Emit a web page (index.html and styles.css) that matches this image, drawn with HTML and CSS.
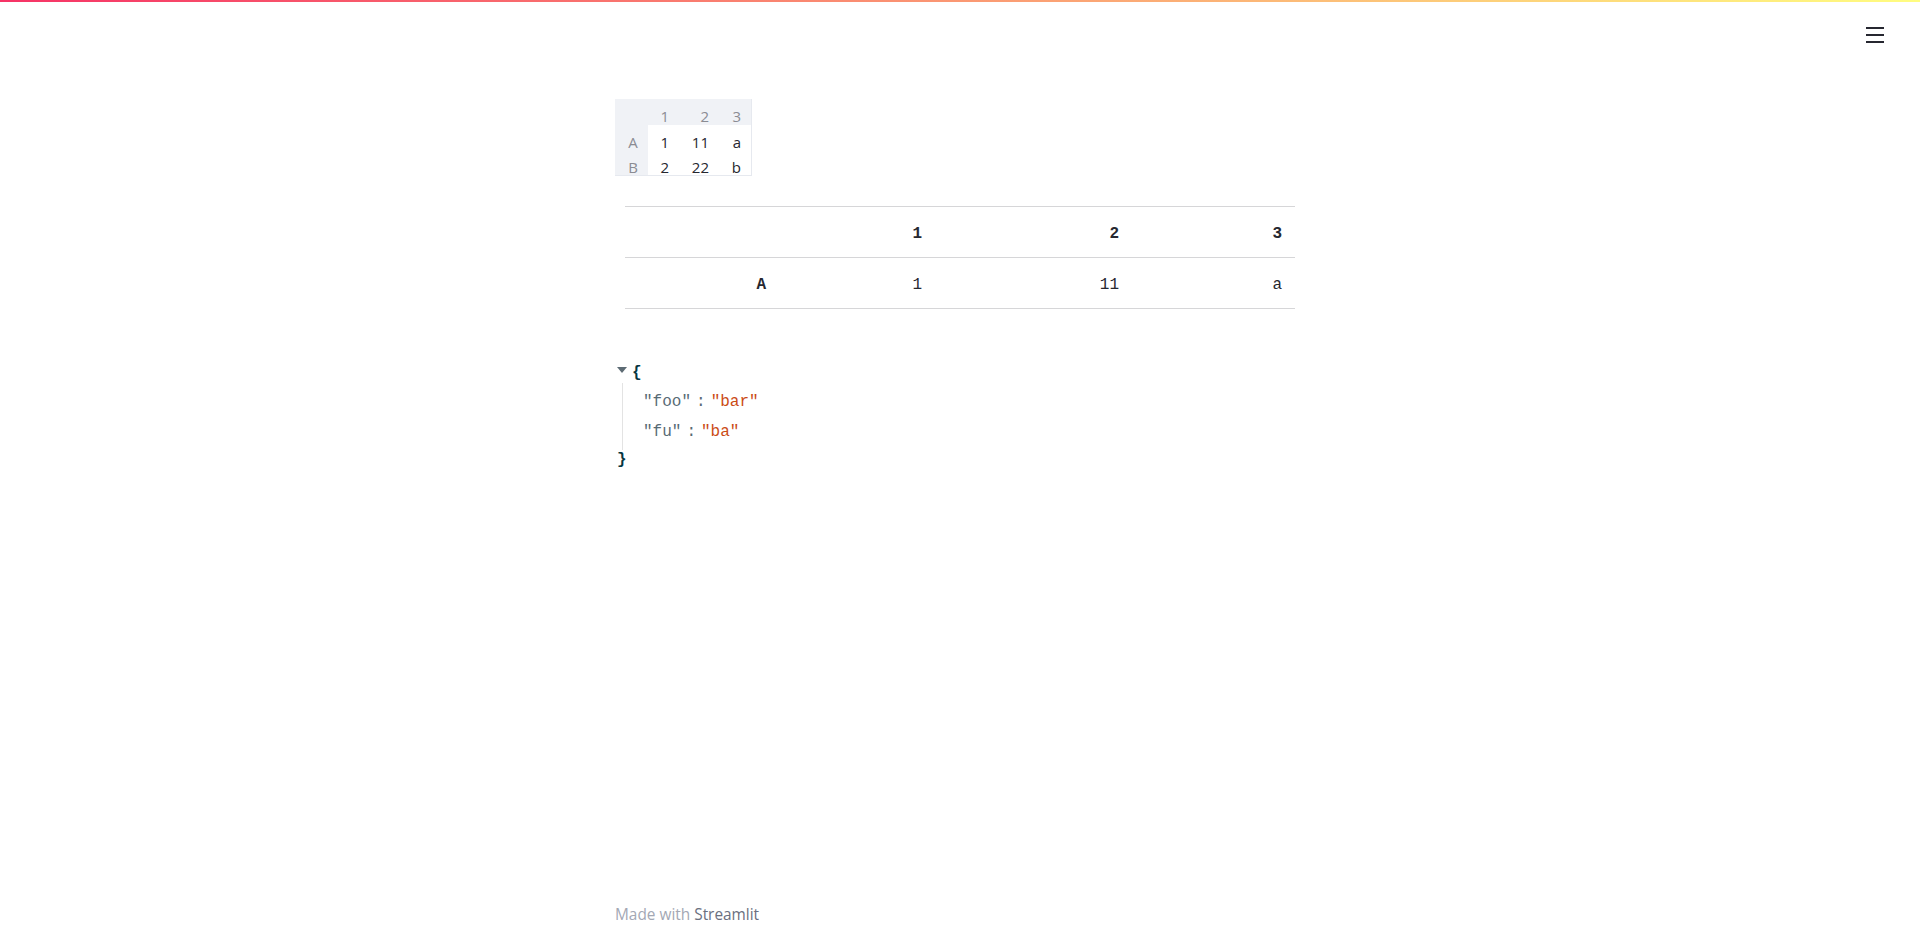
FILE: index.html
```html
<!DOCTYPE html>
<html>
<head>
<meta charset="utf-8">
<link rel="stylesheet" href="styles.css">
</head>
<body>
<div class="decoration"></div>
<div class="toolbar">
  <button class="menu-btn" aria-label="menu">
    <svg width="18" height="16" viewBox="0 0 18 16"><rect x="0" y="0" width="18" height="2" fill="#262730"/><rect x="0" y="7" width="18" height="2" fill="#262730"/><rect x="0" y="14" width="18" height="2" fill="#262730"/></svg>
  </button>
</div>
<main class="main">
  <div class="dataframe">
    <div class="df-row df-head">
      <div class="df-cell df-index"></div>
      <div class="df-cell c1">1</div>
      <div class="df-cell c2">2</div>
      <div class="df-cell c3">3</div>
    </div>
    <div class="df-row">
      <div class="df-cell df-index">A</div>
      <div class="df-cell c1 data">1</div>
      <div class="df-cell c2 data">11</div>
      <div class="df-cell c3 data">a</div>
    </div>
    <div class="df-row">
      <div class="df-cell df-index">B</div>
      <div class="df-cell c1 data">2</div>
      <div class="df-cell c2 data">22</div>
      <div class="df-cell c3 data">b</div>
    </div>
  </div>

  <table class="static-table">
    <colgroup><col class="t0"><col class="t1"><col class="t2"><col class="t3"></colgroup>
    <thead>
      <tr><th></th><th>1</th><th>2</th><th>3</th></tr>
    </thead>
    <tbody>
      <tr><th>A</th><td>1</td><td>11</td><td>a</td></tr>
    </tbody>
  </table>

  <div class="json">
    <div class="json-open"><span class="caret"></span><span class="brace">{</span></div>
    <div class="json-body">
      <div class="json-row"><span class="key">"foo"</span><span class="colon">:</span><span class="val">"bar"</span></div>
      <div class="json-row"><span class="key">"fu"</span><span class="colon">:</span><span class="val">"ba"</span></div>
    </div>
    <div class="json-close"><span class="brace">}</span></div>
  </div>
</main>
<footer class="footer">Made with <a class="footer-link">Streamlit</a></footer>
</body>
</html>
```

FILE: styles.css
```css
html, body {
  margin: 0;
  padding: 0;
  background: #ffffff;
}
body {
  font-family: "Open Sans", "Liberation Sans", sans-serif;
  color: #262730;
  min-height: 935px;
  display: flex;
  flex-direction: column;
}
.decoration {
  height: 2px;
  background-image: linear-gradient(90deg, #f63366, #fffd80);
}
.toolbar {
  position: absolute;
  top: 27px;
  right: 36px;
}
.menu-btn {
  border: none;
  background: transparent;
  padding: 0;
  margin: 0;
  display: block;
  line-height: 0;
}
.main {
  flex: 1;
  width: 690px;
  margin: 0 auto;
  padding-top: 97px;
  box-sizing: border-box;
}
.dataframe {
  display: inline-flex;
  flex-direction: column;
  background: #f0f2f6;
  font-size: 15px;
  border-right: 1px solid #e6e9ef;
  border-bottom: 1px solid #e6e9ef;
}
.df-row {
  display: flex;
  height: 25px;
}
.df-head {
  height: 26px;
}
.df-cell {
  box-sizing: border-box;
  height: 100%;
  display: flex;
  align-items: center;
  justify-content: flex-end;
  padding: 8px 11px 0 0;
  color: #8b8c93;
}
.df-index {
  width: 33px;
  justify-content: center;
  padding: 8px 0 0 3px;
}
.c1 { width: 32px; }
.c2 { width: 40px; }
.c3 { width: 31px; padding-right: 10px; }
.data {
  background: #ffffff;
  color: #262730;
}
.static-table {
  border-collapse: collapse;
  table-layout: fixed;
  width: 670px;
  margin: 30px 10px 0 10px;
  font-family: "Liberation Mono", "DejaVu Sans Mono", monospace;
  font-size: 16px;
  color: #262730;
}
.t0 { width: 154px; }
.t1 { width: 156px; }
.t2 { width: 197px; }
.t3 { width: 163px; }
.static-table th,
.static-table td {
  text-align: right;
  height: 51px;
  padding: 4px 13px 0 0;
  border-top: 1px solid #d6d6d8;
  border-bottom: 1px solid #d6d6d8;
  box-sizing: border-box;
}
.static-table th {
  font-weight: bold;
}
.static-table td {
  font-weight: normal;
}
.json {
  margin-top: 54px;
  font-family: "Liberation Mono", "DejaVu Sans Mono", monospace;
  font-size: 16px;
  color: #586b75;
}
.json-open {
  display: flex;
  align-items: center;
  height: 20px;
}
.caret {
  width: 0;
  height: 0;
  border-left: 5px solid transparent;
  border-right: 5px solid transparent;
  border-top: 6px solid #5d6b74;
  margin: 0 5px 6px 2px;
}
.brace {
  color: #073642;
  font-weight: bold;
}
.json-body {
  margin-left: 7px;
  border-left: 1px solid #e3e3e3;
  padding: 4px 0 3px 20px;
}
.json-row {
  height: 30px;
  display: flex;
  align-items: center;
}
.colon {
  margin: 0 5px;
  color: #586b75;
}
.val {
  color: #cb4b16;
}
.json-close {
  height: 20px;
  display: flex;
  align-items: center;
  padding-left: 2px;
}
.footer {
  width: 690px;
  margin: 0 auto;
  box-sizing: border-box;
  padding: 0 0 10px 0;
  font-size: 15.4px;
  color: #a3a8b4;
  line-height: 20px;
}
.footer-link {
  color: #6b7080;
}
```
